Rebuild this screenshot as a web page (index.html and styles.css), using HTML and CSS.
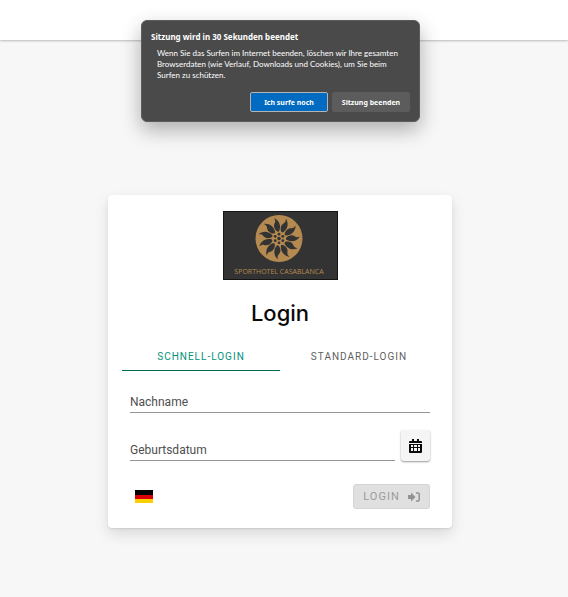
FILE: index.html
```html
<!DOCTYPE html>
<html lang="de">
<head>
<meta charset="utf-8">
<meta name="viewport" content="width=device-width, initial-scale=1">
<title>Login</title>
<link rel="stylesheet" href="styles.css">
</head>
<body>
<header class="topbar"></header>

<div class="session" role="dialog" aria-labelledby="session-title">
  <h2 class="session-title" id="session-title">Sitzung wird in 30 Sekunden beendet</h2>
  <p class="session-text">Wenn Sie das Surfen im Internet beenden, löschen wir Ihre gesamten<br>Browserdaten (wie Verlauf, Downloads und Cookies), um Sie beim<br>Surfen zu schützen.</p>
  <div class="session-actions">
    <button class="session-button session-button-primary" type="button">Ich surfe noch</button>
    <button class="session-button" type="button">Sitzung beenden</button>
  </div>
</div>

<main class="page">
  <section class="card">
    <svg class="logo" viewBox="0 0 115 69" role="img" aria-label="Sporthotel Casablanca">
      <rect x=".5" y=".5" width="114" height="68" fill="#333" stroke="#151515"/>
      <circle cx="56" cy="27.5" r="23.5" fill="#b58a50"/>
      <g fill="#333">
        <g transform="rotate(-8 56 27.500)">
          <path id="petal" d="M55.500 20.500C52.500 18 52 14 54 11.500C55 10 55 9 54 6.500C58.500 9.500 60.500 15 57 20.500Z"/>
          <use href="#petal" transform="rotate(32.700 56 27.500)"/>
          <use href="#petal" transform="rotate(65.500 56 27.500)"/>
          <use href="#petal" transform="rotate(98.200 56 27.500)"/>
          <use href="#petal" transform="rotate(130.900 56 27.500)"/>
          <use href="#petal" transform="rotate(163.600 56 27.500)"/>
          <use href="#petal" transform="rotate(196.400 56 27.500)"/>
          <use href="#petal" transform="rotate(229.100 56 27.500)"/>
          <use href="#petal" transform="rotate(261.800 56 27.500)"/>
          <use href="#petal" transform="rotate(294.500 56 27.500)"/>
          <use href="#petal" transform="rotate(327.300 56 27.500)"/>
        </g>
        <circle cx="56" cy="27.500" r="1.800"/>
        <circle cx="56" cy="23.200" r="1.400"/>
        <circle cx="59.800" cy="25.300" r="1.400"/>
        <circle cx="59.800" cy="29.700" r="1.400"/>
        <circle cx="56" cy="31.800" r="1.400"/>
        <circle cx="52.200" cy="29.700" r="1.400"/>
        <circle cx="52.200" cy="25.300" r="1.400"/>
      </g>
      <text class="logo-text" x="56" y="63" text-anchor="middle">SPORTHOTEL CASABLANCA</text>
    </svg>
    <h1 class="title">Login</h1>
    <div class="tabs" role="tablist">
      <button class="tab tab-active" type="button" role="tab" aria-selected="true">SCHNELL-LOGIN</button>
      <button class="tab" type="button" role="tab" aria-selected="false">STANDARD-LOGIN</button>
    </div>
    <form class="form">
      <div class="field">
        <label class="field-label" for="lastname">Nachname</label>
        <input class="field-input" id="lastname" type="text">
      </div>
      <div class="date-row">
        <div class="field">
          <label class="field-label" for="birthdate">Geburtsdatum</label>
          <input class="field-input" id="birthdate" type="text">
        </div>
        <button class="calendar" type="button" aria-label="Kalender">
          <svg width="13" height="14" viewBox="0 0 13 14" aria-hidden="true"><path fill="#0a0a0a" fill-rule="evenodd" d="M3 0h2v2h3V0h2v2h2q1 0 1 1v1H0V3q0-1 1-1h2zM0 5h13v8q0 1-1 1H1q-1 0-1-1zM2 6v2h2V6zM5 6v2h3V6zM9 6v2h2V6zM2 9v3h2V9zM5 9v3h3V9zM9 9v3h2V9z"/></svg>
        </button>
      </div>
      <div class="footer">
        <button class="language" type="button" aria-label="Deutsch">
          <svg class="flag" width="18" height="13" viewBox="0 0 18 13" aria-hidden="true"><path fill="#000" d="M0 0h18v5H0z"/><path fill="#d80000" d="M0 5h18v4H0z"/><path fill="#ffce00" d="M0 9h18v4H0z"/></svg>
        </button>
        <button class="submit" type="submit" disabled>LOGIN
          <svg width="12" height="10" viewBox="0 0 12 10" aria-hidden="true"><path fill="#929292" d="M0 3h3V.500L7.500 5 3 9.500V7H0z"/><path fill="none" stroke="#929292" stroke-width="1.500" d="M8 1h2q1.200 0 1.200 1.200v5.600Q11.200 9 10 9H8"/></svg>
        </button>
      </div>
    </form>
  </section>
</main>
</body>
</html>
```

FILE: styles.css
```css
* { box-sizing: border-box; }

body {
  margin: 0;
  min-height: 100vh;
  background: #f7f7f7;
  color: #0a0a0a;
  font-family: Roboto, "Liberation Sans", sans-serif;
}

button { font-family: inherit; cursor: pointer; }

.topbar {
  height: 40px;
  background: #fff;
  box-shadow: 0 1px 2px rgba(0, 0, 0, .25);
}

.session {
  position: absolute;
  top: 20px;
  left: calc(50% - 143px);
  width: 279px;
  padding: 10px 9px 9px;
  border: 1px solid #5c5c5c;
  border-radius: 6px;
  background: #4a4a4a;
  color: #fff;
  font-family: "Noto Sans", "Open Sans", sans-serif;
  box-shadow: 0 8px 20px rgba(0, 0, 0, .3);
}

.session-title {
  margin: 0;
  font-size: 8px;
  line-height: 11px;
  font-weight: 700;
}

.session-text {
  margin: 6px 0 11px 6px;
  font-family: Lato, "Noto Sans", sans-serif;
  font-size: 8px;
  line-height: 11px;
  white-space: nowrap;
}

.session-actions {
  display: flex;
  justify-content: flex-end;
  gap: 4px;
}

.session-button {
  width: 78px;
  height: 20px;
  padding: 0;
  border: 1px solid #5c5c5c;
  border-radius: 2px;
  background: #5c5c5c;
  color: #fff;
  font-size: 7px;
  font-weight: 700;
}

.session-button-primary {
  border-color: #b4b4b4;
  background: #006bc1;
}

.page {
  padding: 155px 116px 40px 108px;
}

.card {
  max-width: 480px;
  margin: 0 auto;
  padding: 16px 14px 19px;
  border-radius: 4px;
  background: #fff;
  box-shadow: 0 6px 14px rgba(0, 0, 0, .12), 0 1px 2px rgba(0, 0, 0, .1);
}

.logo {
  display: block;
  width: 115px;
  height: 69px;
  margin: 0 auto;
}

.logo-text {
  font-family: "Open Sans", sans-serif;
  font-size: 7px;
  fill: #b58a50;
}

.title {
  margin: 18px 0 14px;
  font-family: Inter, sans-serif;
  font-size: 22px;
  line-height: 30px;
  font-weight: 500;
  text-align: center;
}

.tabs {
  display: grid;
  grid-template-columns: 1fr 1fr;
}

.tab {
  height: 29px;
  padding: 0;
  border: 0;
  border-bottom: 1px solid transparent;
  background: none;
  color: #5f5f5f;
  font-size: 10px;
  letter-spacing: 1px;
}

.tab-active {
  border-color: #006b54;
  color: #00927a;
}

.form { padding: 14px 8px 0; }

.field {
  display: grid;
  flex: 1;
}

.field-label,
.field-input {
  grid-area: 1 / 1;
  height: 28px;
  font-size: 12px;
}

.field-label {
  padding-top: 8px;
  line-height: 18px;
  color: #4f4f4f;
}

.field-input {
  width: 100%;
  min-width: 0;
  padding: 4px 0 0;
  border: 0;
  border-bottom: 1px solid #949494;
  background: none;
  font-family: inherit;
}

.date-row {
  display: flex;
  align-items: flex-end;
  gap: 6px;
  margin-top: 17px;
}

.calendar {
  display: grid;
  place-items: center;
  width: 29px;
  height: 31px;
  padding: 0;
  border: 0;
  border-radius: 3px;
  background: #f5f5f5;
  box-shadow: 0 1px 2px rgba(0, 0, 0, .4);
}

.footer {
  display: flex;
  align-items: center;
  justify-content: space-between;
  margin-top: 23px;
}

.language {
  padding: 5px;
  border: 0;
  background: none;
}

.flag { display: block; }

.submit {
  display: flex;
  align-items: center;
  justify-content: center;
  gap: 8px;
  width: 77px;
  height: 25px;
  padding: 0;
  border: 1px solid #d4d4d4;
  border-radius: 3px;
  background: #e0e0e0;
  color: #9b9b9b;
  font-size: 11px;
  letter-spacing: 1px;
}
```
